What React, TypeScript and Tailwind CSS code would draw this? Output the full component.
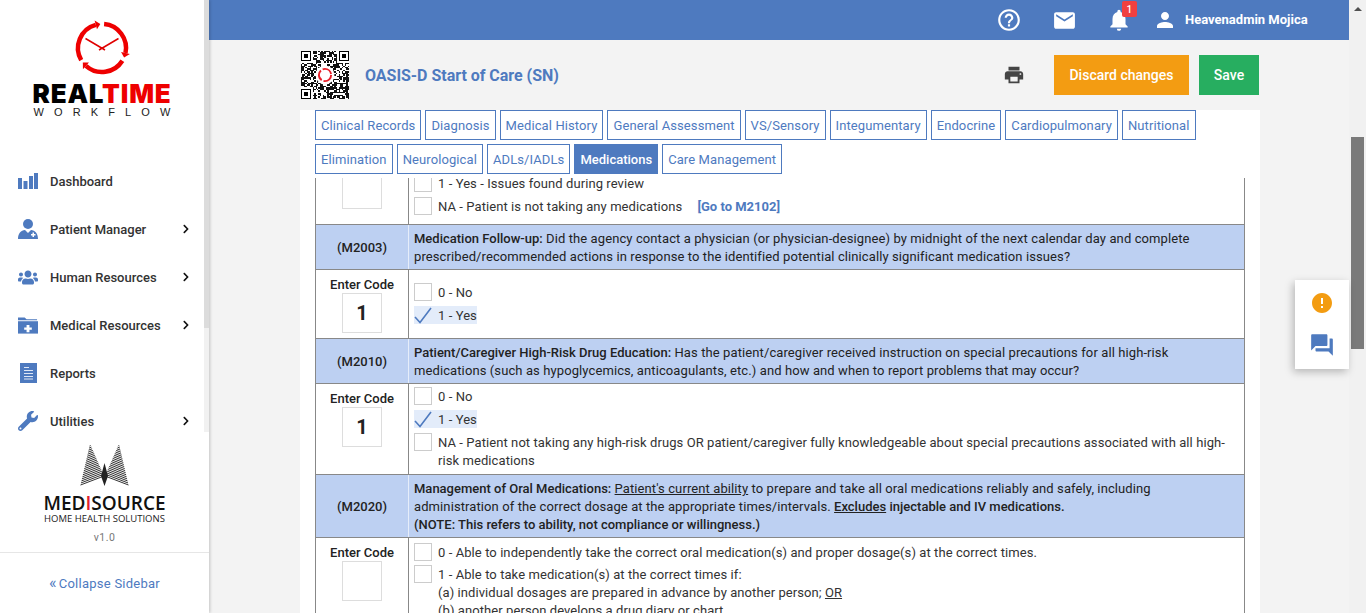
import type { ReactNode } from "react"
import { FaUsers, FaWrench, FaChevronRight } from "react-icons/fa"
import {
  MdHelpOutline,
  MdEmail,
  MdNotifications,
  MdPerson,
  MdPrint,
  MdError,
  MdQuestionAnswer,
} from "react-icons/md"

const tabsTop = ["Clinical Records", "Diagnosis", "Medical History", "General Assessment", "VS/Sensory", "Integumentary", "Endocrine", "Cardiopulmonary", "Nutritional"]
const tabsBottom = ["Elimination", "Neurological", "ADLs/IADLs", "Medications", "Care Management"]

function BarsIcon() {
  return (
    <svg width="20" height="16" viewBox="0 0 20 16" fill="#4e7abf">
      <rect x="0" y="5" width="4" height="11" />
      <rect x="5.500" y="8" width="4" height="8" />
      <rect x="11" y="3" width="4" height="13" />
      <rect x="16" y="0" width="4" height="16" />
    </svg>
  )
}

function PatientIcon() {
  return (
    <svg width="20" height="20" viewBox="0 0 20 20" fill="#4e7abf">
      <circle cx="10" cy="5" r="5" />
      <path d="M0 20C0 14 3 11.500 7 11L10 14L13 11C17 11.500 20 14 20 20Z" />
      <path d="M13 15h1.500v-1.500h1.500V15h1.500v1.500H16V18h-1.500v-1.500H13z" fill="#fff" />
    </svg>
  )
}

function FolderPlusIcon() {
  return (
    <svg width="21" height="17" viewBox="0 0 21 17" fill="#4e7abf">
      <path d="M0 0H7L9 2H20V3H0Z" />
      <path d="M0 4H21V17H0Z" />
      <path d="M9 8h3v2.500h2.500v2.500H12v2.500H9V13H6.500v-2.500H9z" fill="#fff" />
    </svg>
  )
}

function ReportIcon() {
  return (
    <svg width="17" height="20" viewBox="0 0 17 20">
      <rect width="17" height="20" fill="#4e7abf" />
      <path d="M4 4.500H9M4 7.500H13M4 10.500H13M4 13.500H13M4 16H13" stroke="#dfe7f5" strokeWidth="1" />
    </svg>
  )
}

const navItems: { label: string; icon: ReactNode; arrow?: boolean }[] = [
  { label: "Dashboard", icon: <BarsIcon /> },
  { label: "Patient Manager", icon: <PatientIcon />, arrow: true },
  { label: "Human Resources", icon: <FaUsers size={21} color="#4e7abf" />, arrow: true },
  { label: "Medical Resources", icon: <FolderPlusIcon />, arrow: true },
  { label: "Reports", icon: <ReportIcon /> },
  { label: "Utilities", icon: <FaWrench size={20} color="#4e7abf" />, arrow: true },
]

const polar = (deg: number, r = 24) => {
  const a = ((deg - 90) * Math.PI) / 180
  return [30 + r * Math.cos(a), 30 + r * Math.sin(a)]
}

function RealtimeLogo() {
  const arcs = [
    [5, 102],
    [122, 222],
    [240, 345],
  ]
  return (
    <svg width="60" height="60" viewBox="0 0 60 60" fill="none" className="block">
      {arcs.map(([from, to]) => {
        const [x1, y1] = polar(from)
        const [x2, y2] = polar(to)
        const tip = polar(to + 11)
        const outer = polar(to, 28.500)
        const inner = polar(to, 19.500)
        return (
          <g key={from}>
            <path d={`M${x1} ${y1}A24 24 0 0 1 ${x2} ${y2}`} stroke="#ee0000" strokeWidth="4.500" />
            <path d={`M${outer[0]} ${outer[1]}L${tip[0]} ${tip[1]}L${inner[0]} ${inner[1]}Z`} fill="#ee0000" />
          </g>
        )
      })}
      <path d="M13.500 20.500L33 32M46.500 20.500L27 32" stroke="#e00000" strokeWidth="1.500" />
    </svg>
  )
}

function MedisourceMark() {
  const feathers = Array.from({ length: 21 }, (_, i) => i / 20)
  return (
    <svg width="50" height="44" viewBox="0 0 50 44" className="block">
      {feathers.map((t) => {
        const y1 = 1 + t * 41
        const x1 = 10 - t * 9.500
        const x2 = 10 + t * 14
        const y2 = 1 + t * 32
        return (
          <g key={t} stroke="#333" strokeWidth="1">
            <line x1={x1} y1={y1} x2={x2} y2={y2} />
            <line x1={49 - x1} y1={y1} x2={49 - x2} y2={y2} />
          </g>
        )
      })}
      <path d="M24.500 20L21 33L24.500 43L28 33Z" fill="#222" />
    </svg>
  )
}

function QrCode() {
  const size = 33
  const isFinder = (x: number, y: number) => (x < 8 && y < 8) || (x > 24 && y < 8) || (x < 8 && y > 24)
  const cells: [number, number][] = []
  for (let y = 0; y < size; y++) {
    for (let x = 0; x < size; x++) {
      if (isFinder(x, y)) continue
      const h = (x * 7 + y * 13 + ((x * y) % 5) * 11 + ((x ^ y) % 3) * 5) % 9
      if (h < 5) cells.push([x, y])
    }
  }
  const finder = (x: number, y: number) => (
    <g key={`${x}-${y}`}>
      <rect x={x} y={y} width="7" height="7" fill="#000" />
      <rect x={x + 1} y={y + 1} width="5" height="5" fill="#fff" />
      <rect x={x + 2} y={y + 2} width="3" height="3" fill="#000" />
    </g>
  )
  return (
    <svg width="48" height="48" viewBox="0 0 33 33" shapeRendering="crispEdges" className="block">
      <rect width="33" height="33" fill="#fff" />
      {cells.map(([x, y]) => (
        <rect key={`${x}:${y}`} x={x} y={y} width="1" height="1" fill="#111" />
      ))}
      {finder(0, 0)}
      {finder(26, 0)}
      {finder(0, 26)}
      <circle cx="16.500" cy="16.500" r="6.500" fill="#fff" shapeRendering="auto" />
      <circle cx="16.500" cy="16.500" r="4.200" fill="none" stroke="#e8202a" strokeWidth="1.300" strokeDasharray="7.500 1.300" shapeRendering="auto" />
    </svg>
  )
}

function Option({ children, checked, highlight, tight }: { children: ReactNode; checked?: boolean; highlight?: boolean; tight?: boolean }) {
  return (
    <div className={`flex items-start last:mb-0 ${tight ? "mb-[4px]" : "mb-[5px]"}`}>
      <div className={`flex items-start ${highlight ? "bg-[#e3ecfa]" : ""}`}>
        {checked ? (
          <svg width="18" height="18" viewBox="0 0 18 18" fill="none" className="shrink-0">
            <path d="M1 11L6 16.500L17 2" stroke="#4e7abf" strokeWidth="1.600" />
          </svg>
        ) : (
          <div className="w-[18px] h-[18px] border border-[#ccc] bg-white shrink-0" />
        )}
        <div className={`ml-[6px] pt-[1px] -mb-[1px] leading-[18px] ${highlight ? "" : "flex-1"}`}>{children}</div>
      </div>
    </div>
  )
}

function CodeCell({ value }: { value?: string }) {
  return (
    <div className="w-[93px] shrink-0 border-r border-[#888] flex flex-col items-center pt-[5px]">
      <div className="font-medium text-[#222] leading-[18px] pt-[1px] -mb-[2px] tracking-normal">Enter Code</div>
      <div className="mt-[1px] w-[40px] h-[40px] border border-[#ddd] flex items-center justify-center text-[20px] font-bold text-[#222]">
        {value}
      </div>
    </div>
  )
}

function QuestionRow({ code, children }: { code: string; children: ReactNode }) {
  return (
    <div className="flex border-b border-[#888] bg-[#bdd0f2]">
      <div className="w-[93px] shrink-0 flex items-center justify-center font-medium text-[#222] border-r border-[#e6edfa] pt-[2px] tracking-normal">{code}</div>
      <div className="flex-1 pl-[5px] pr-[20px] pt-[5px] pb-[3px] leading-[18px] text-[#222] tracking-[0.1px]">{children}</div>
    </div>
  )
}

const strong = "font-medium tracking-normal"

export default function App() {
  return (
    <div className="flex w-[1366px] h-[613px] overflow-hidden bg-[#f3f3f3] font-['Roboto',sans-serif] text-[13px] text-[#333] tracking-[0.08px] relative">
      {/* sidebar */}
      <aside className="w-[209px] h-full shrink-0 bg-white flex flex-col shadow-[1px_0_3px_rgba(0,0,0,0.2)] z-10 tracking-normal">
        <div className="h-[432px] flex overflow-hidden">
          <div className="w-[204px] shrink-0">
            <div className="h-[157px] flex flex-col items-center pt-[18px]">
              <RealtimeLogo />
              <div className="mt-[1px] font-['Inter',sans-serif] font-black text-[26px] leading-[30px] tracking-[0.8px] text-black">
                REAL<span className="text-[#ee0000]">TIME</span>
              </div>
              <div className="-mt-[3px] font-['Liberation_Sans',sans-serif] text-[11px] leading-[12px] tracking-[10.100px] pl-[10px] text-[#222]">WORKFLOW</div>
            </div>
            {navItems.map((item) => (
              <div key={item.label} className="h-[48px] flex items-center pl-[18px]">
                <div className="w-[20px] flex justify-center">{item.icon}</div>
                <span className="ml-[12px] mt-[2px] font-medium text-[#333]">{item.label}</span>
                {item.arrow && <FaChevronRight size={10} color="#111" className="ml-auto mr-[13px]" />}
              </div>
            ))}
          </div>
          <div className="w-[5px] bg-[#f1f1f1]">
            <div className="h-[328px] bg-[#dcdcdc]" />
          </div>
        </div>
        <div className="h-[121px] flex flex-col items-center pt-[11px] border-b border-[#e6e6e6]">
          <MedisourceMark />
          <div className="mt-[7px] font-['Open_Sans',sans-serif] font-semibold text-[#111] text-[19px] leading-[18px]">
            MED<span className="text-[#e2202c]">I</span>SOURCE
          </div>
          <div className="font-['Open_Sans',sans-serif] text-[#222] text-[9.500px] leading-[13px]">HOME HEALTH SOLUTIONS</div>
          <div className="mt-[5px] text-[10.500px] text-[#777] tracking-[0.5px]">v1.0</div>
        </div>
        <div className="flex-1 flex items-center justify-center text-[#4e7abf] pt-[2px] tracking-[0.25px]">
          <span className="mr-[2px] text-[16px] leading-none -mt-[3px]">«</span>Collapse Sidebar
        </div>
      </aside>

      {/* main */}
      <main className="w-[1140px] shrink-0 flex flex-col h-full">
        <header className="h-[40px] shrink-0 bg-[#4e7abf] flex items-center text-white pl-[787px]">
          <MdHelpOutline size={26} />
          <MdEmail size={25} className="ml-[30px]" />
          <div className="relative ml-[29px]">
            <MdNotifications size={26} />
            <span className="absolute -top-[6px] left-[16px] w-[15px] h-[16px] rounded-[2px] bg-[#f04040] text-[10px] font-medium flex items-center justify-center">1</span>
          </div>
          <MdPerson size={24} className="ml-[21px]" />
          <span className="ml-[8px] font-bold text-[13px] tracking-normal">Heavenadmin Mojica</span>
        </header>

        <div className="w-[960px] ml-[91px] flex-1 flex flex-col">
          <div className="h-[70px] flex items-center pr-[1px] pl-[1px]">
            <QrCode />
            <h1 className="ml-[16px] pt-[2px] text-[16px] font-bold text-[#4e7abf] tracking-[-0.03px]">OASIS-D Start of Care (SN)</h1>
            <MdPrint size={22} color="#444" className="ml-auto mr-[29px]" />
            <button className="w-[135px] h-[40px] bg-[#f39c12] text-white text-[14px] font-medium tracking-normal">Discard changes</button>
            <button className="ml-[10px] w-[60px] h-[40px] bg-[#27ae60] text-white text-[14px] font-medium tracking-normal">Save</button>
          </div>

          <div className="flex-1 bg-white px-[15px]">
            <div className="h-[68px] flex flex-col gap-[4px]">
              {[tabsTop, tabsBottom].map((row, i) => (
                <div key={i} className="flex gap-[4px]">
                  {row.map((tab) =>
                    tab === "Medications" ? (
                      <div key={tab} className="h-[30px] px-[6px] pt-[2px] flex items-center bg-[#4e7abf] text-white font-medium tracking-normal">{tab}</div>
                    ) : (
                      <div key={tab} className="h-[30px] px-[5px] pt-[2px] flex items-center border border-[#4e7abf] text-[#4e7abf] tracking-[0.1px]">{tab}</div>
                    )
                  )}
                </div>
              ))}
            </div>

            {/* assessment table */}
            <div className="w-[930px] border-x border-[#888]">
              <div className="flex h-[47px] border-b border-[#888] overflow-hidden">
                <div className="w-[93px] shrink-0 border-r border-[#888] flex flex-col items-center justify-end pb-[15px]">
                  <div className="w-[40px] h-[40px] shrink-0 border border-[#ddd]" />
                </div>
                <div className="flex-1 pl-[5px] flex flex-col justify-end pb-[9px]">
                  <Option>1 - Yes - Issues found during review</Option>
                  <Option>
                    NA - Patient is not taking any medications
                    <span className="ml-[15px] font-bold text-[#4e7abf] tracking-normal">[Go to M2102]</span>
                  </Option>
                </div>
              </div>

              <QuestionRow code="(M2003)">
                <span className={strong}>Medication Follow-up:</span> Did the agency contact a physician (or physician-designee) by midnight of the next calendar day and complete prescribed/recommended actions in response to the identified potential clinically significant medication issues?
              </QuestionRow>
              <div className="flex h-[69px] border-b border-[#888]">
                <div className="flex"><CodeCell value="1" /></div>
                <div className="flex-1 pl-[5px] pt-[13px]">
                  <Option>0 - No</Option>
                  <Option checked highlight>1 - Yes</Option>
                </div>
              </div>

              <QuestionRow code="(M2010)">
                <span className={strong}>Patient/Caregiver High-Risk Drug Education:</span> Has the patient/caregiver received instruction on special precautions for all high-risk medications (such as hypoglycemics, anticoagulants, etc.) and how and when to report problems that may occur?
              </QuestionRow>
              <div className="flex h-[91px] border-b border-[#888]">
                <div className="flex"><CodeCell value="1" /></div>
                <div className="flex-1 pl-[5px] pr-[12px] pt-[3px]">
                  <Option>0 - No</Option>
                  <Option checked highlight>1 - Yes</Option>
                  <Option>NA - Patient not taking any high-risk drugs OR patient/caregiver fully knowledgeable about special precautions associated with all high-risk medications</Option>
                </div>
              </div>

              <QuestionRow code="(M2020)">
                <span className={strong}>Management of Oral Medications:</span> <u>Patient's current ability</u> to prepare and take all oral medications reliably and safely, including administration of the correct dosage at the appropriate times/intervals. <u className={strong}>Excludes</u> <span className={strong}>injectable and IV medications.</span>
                <br />
                <span className={strong}>(NOTE: This refers to ability, not compliance or willingness.)</span>
              </QuestionRow>
              <div className="flex">
                <div className="flex"><CodeCell /></div>
                <div className="flex-1 pl-[5px] pt-[5px]">
                  <Option tight>0 - Able to independently take the correct oral medication(s) and proper dosage(s) at the correct times.</Option>
                  <Option>
                    1 - Able to take medication(s) at the correct times if:
                    <br />
                    (a) individual dosages are prepared in advance by another person; <u>OR</u>
                    <br />
                    (b) another person develops a drug diary or chart.
                  </Option>
                </div>
              </div>
            </div>
          </div>
        </div>
      </main>

      {/* page scrollbar */}
      <div className="w-[17px] shrink-0 bg-[#f1f1f1] flex flex-col items-center">
        <div className="mt-[7px] w-0 h-0 border-x-[4px] border-x-transparent border-b-[4px] border-b-[#505050]" />
        <div className="mt-[126px] w-[13px] h-[212px] bg-[#7a7a7a]" />
      </div>

      {/* floating actions */}
      <div className="absolute left-[1295px] top-[280px] w-[54px] h-[89px] bg-white shadow-[-2px_3px_8px_rgba(0,0,0,0.25)] flex flex-col items-center z-20">
        <MdError size={24} color="#f39c12" className="mt-[11px]" />
        <MdQuestionAnswer size={26} color="#4e7abf" className="mt-[17px]" />
      </div>
    </div>
  )
}
